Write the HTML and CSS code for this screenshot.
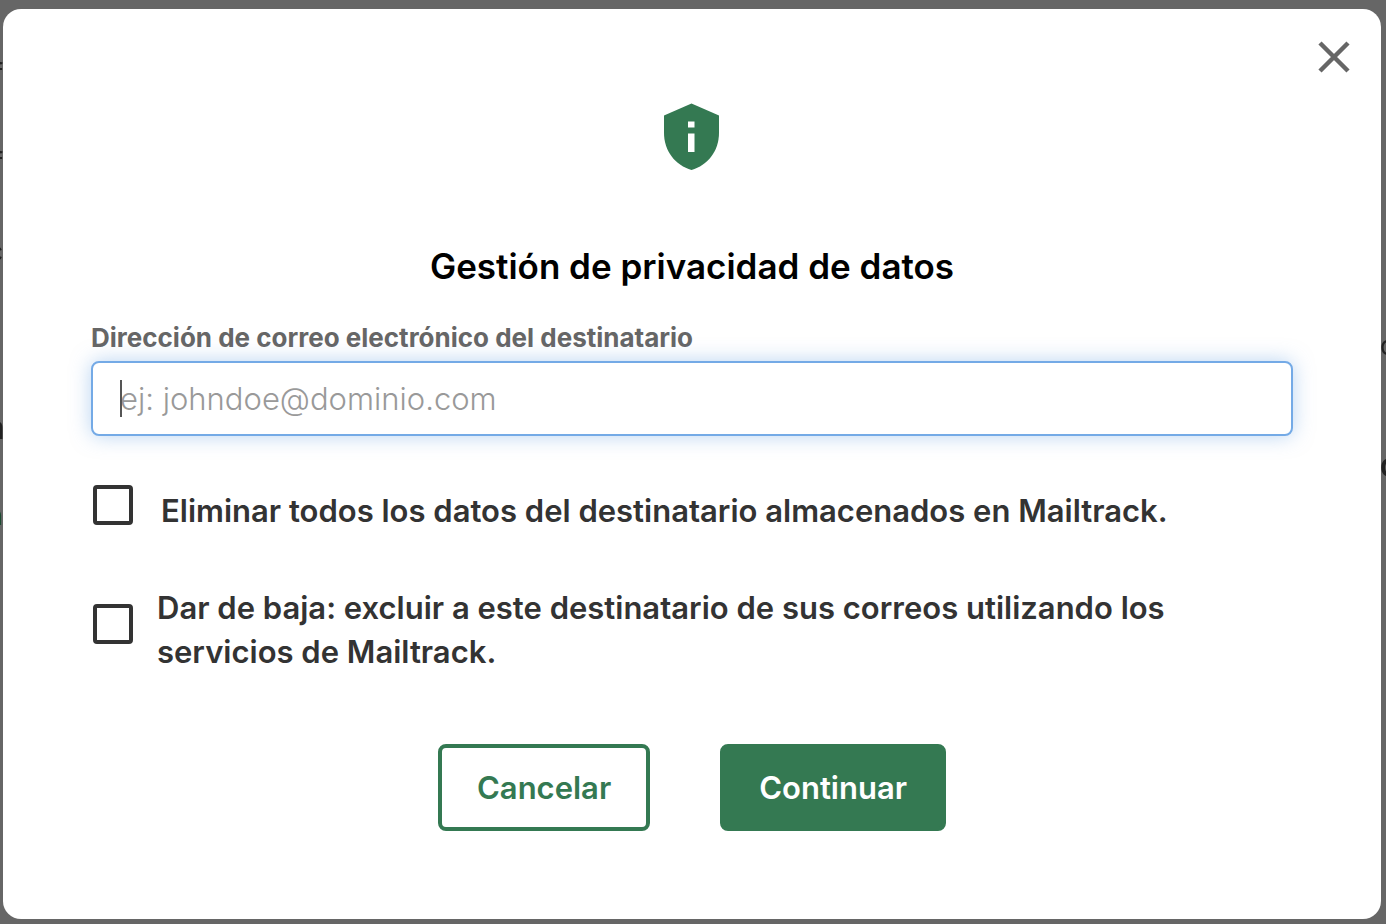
FILE: index.html
```html
<!DOCTYPE html>
<html lang="es">
<head>
  <meta charset="UTF-8" />
  <meta name="viewport" content="width=device-width, initial-scale=1.0"/>
  <title>Gestión de privacidad de datos</title>
  <link rel="stylesheet" href="styles.css">
</head>
<body>

  <!-- Page behind the overlay -->
  <div class="page-behind" aria-hidden="true">
    <span class="peek peek-left peek-1">f</span>
    <span class="peek peek-left peek-2">f</span>
    <span class="peek peek-left peek-3">c</span>
    <span class="peek peek-left peek-4">n</span>
    <span class="peek peek-left peek-5">n</span>
    <span class="peek peek-right peek-6">o</span>
    <span class="peek peek-right peek-7">C</span>
  </div>

  <div class="modal" role="dialog" aria-modal="true" aria-labelledby="modalTitle">
    <button type="button" class="close" aria-label="Cerrar">
      <svg width="32" height="32" viewBox="0 0 32 32" fill="none" stroke="#666" stroke-width="4.500">
        <path d="M2 2l28 28M30 2L2 30"/>
      </svg>
    </button>

    <form id="privacyForm">
      <svg class="shield" width="56" height="68" viewBox="0 0 56 68" aria-hidden="true">
        <path fill="#347952" d="M27.500 0.500L55 12.500V30C55 48 43.500 62.500 27.500 67C11.500 62.500 0 48 0 30V12.500Z"/>
        <path fill="#fff" d="M24 18.500h6.500v6H24zM24 30.500h6.500v18.500H24z"/>
      </svg>

      <h2 id="modalTitle">Gestión de privacidad de datos</h2>

      <label class="field-label" for="email">Dirección de correo electrónico del destinatario</label>
      <div class="field">
        <input type="email" id="email" name="email" placeholder="ej: johndoe@dominio.com" />
      </div>

      <div class="option option-single">
        <input type="checkbox" id="deleteData" name="deleteData" />
        <label for="deleteData">Eliminar todos los datos del destinatario almacenados en Mailtrack.</label>
      </div>

      <div class="option">
        <input type="checkbox" id="unsubscribe" name="unsubscribe" />
        <label for="unsubscribe">Dar de baja: excluir a este destinatario de sus correos utilizando los servicios de Mailtrack.</label>
      </div>

      <div class="actions">
        <button type="button" class="btn btn-outline">Cancelar</button>
        <button type="submit" class="btn btn-solid">Continuar</button>
      </div>
    </form>
  </div>

</body>
</html>
```
FILE: styles.css
```css
* {
  box-sizing: border-box;
}

body {
  font-family: Inter, "Liberation Sans", sans-serif;
  background-color: #666;
  color: #333;
  margin: 0;
  padding: 9px 5px 5px 3px;
  min-height: 100vh;
  display: flex;
}

/* text of the page showing at the edges of the modal */
.page-behind {
  position: fixed;
  inset: 0;
  overflow: hidden;
}

.peek {
  position: absolute;
  color: #222;
  font-size: 26px;
  line-height: 32px;
}

.peek-left {
  right: calc(100% - 3px);
}

.peek-right {
  left: calc(100% - 6px);
}

.peek-1 { top: 58px; }
.peek-2 { top: 147px; }
.peek-3 { top: 236px; }
.peek-4 { top: 412px; font-size: 32px; right: calc(100% - 5px); }
.peek-5 { top: 500px; color: #1b4a30; }
.peek-6 { top: 330px; }
.peek-7 { top: 452px; font-weight: 700; }

.modal {
  position: relative;
  flex: 1;
  background-color: #fff;
  border-radius: 18px;
  padding: 94px 88px 88px;
}

.close {
  position: absolute;
  top: 32px;
  right: 31px;
  padding: 0;
  border: none;
  background: none;
  cursor: pointer;
}

.close svg {
  display: block;
}

.shield {
  display: block;
  margin: 0 auto;
}

h2 {
  margin: 73px 0 0;
  text-align: center;
  color: #000;
  font-size: 35px;
  line-height: 44px;
  font-weight: 600;
}

.field-label {
  display: block;
  margin: 33px 0 6px;
  color: #666;
  font-size: 26px;
  line-height: 34px;
  font-weight: 700;
}

.field {
  position: relative;
}

/* text cursor */
.field::before {
  content: "";
  position: absolute;
  left: 29px;
  top: 19px;
  width: 2px;
  height: 37px;
  background-color: #555;
}

.field input {
  display: block;
  width: 100%;
  height: 75px;
  padding: 0 27px;
  border: 2px solid #74aae6;
  border-radius: 8px;
  background-color: #fff;
  box-shadow: 0 0 20px rgba(116, 170, 230, 0.5);
  color: #333;
  font-family: inherit;
  font-size: 31px;
  font-weight: 300;
  outline: none;
}

.field input::placeholder {
  color: #999;
}

.option {
  display: flex;
  align-items: flex-start;
  gap: 24px;
  padding: 0 88px 0 2px;
  margin-top: 53px;
  font-size: 31px;
  line-height: 44px;
  font-weight: 600;
}

.option-single {
  gap: 28px;
  margin-top: 49px;
}

.option-single label {
  padding-top: 4px;
}

.option input {
  appearance: none;
  flex: none;
  width: 40px;
  height: 40px;
  margin: 0;
  border: 4px solid #333;
  border-radius: 4px;
  cursor: pointer;
}

.option:not(.option-single) input {
  margin-top: 18px;
}

.option input:checked {
  background-color: #347952;
}

.actions {
  display: flex;
  justify-content: center;
  gap: 70px;
  margin-top: 70px;
}

.btn {
  padding: 20px 35px;
  border: 4px solid #347952;
  border-radius: 8px;
  font-family: inherit;
  font-size: 31px;
  line-height: 39px;
  font-weight: 600;
  cursor: pointer;
}

.btn-outline {
  background-color: #fff;
  color: #347952;
}

.btn-solid {
  background-color: #347952;
  color: #fff;
}
```
